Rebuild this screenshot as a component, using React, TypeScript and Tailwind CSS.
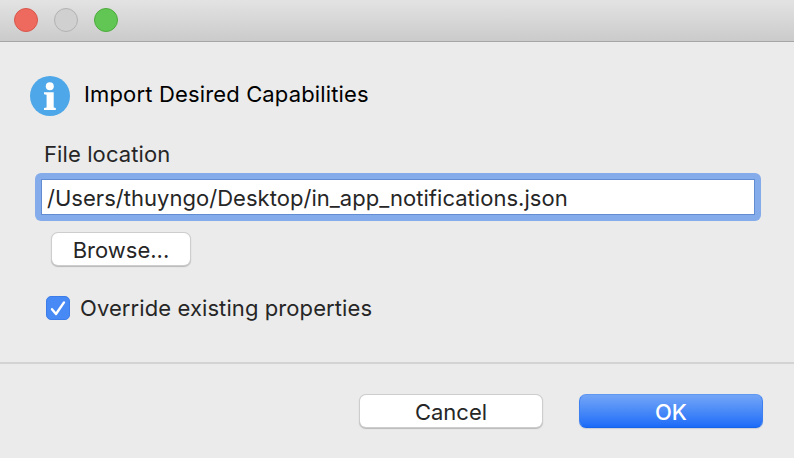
import React from "react";

export default function App() {
  return (
    <main className="flex h-[458px] w-[794px] flex-col overflow-hidden bg-[#ebebeb] font-['Inter','Liberation_Sans',sans-serif] text-[22px] leading-[28px] text-[#262626]">
      <header className="flex h-[42px] shrink-0 items-start gap-4 border-b border-[#a5a5a5] bg-linear-to-b from-[#e3e3e3] to-[#cbcbcb] pt-2 pl-[14px]">
        <span className="size-6 rounded-full border border-[#d9564c] bg-[#ee6a5f]" />
        <span className="size-6 rounded-full border border-[#b2b2b2] bg-[#d0d0d0]" />
        <span className="size-6 rounded-full border border-[#4dab3c] bg-[#62c655]" />
      </header>

      <section className="flex h-[320px] shrink-0 flex-col items-start">
        <div className="mt-[34px] ml-[30px] flex h-10 items-start">
          <svg className="size-10 shrink-0" viewBox="0 0 40 40">
            <circle cx="20" cy="20" r="20" fill="#4ea7e8" />
            <circle cx="19.8" cy="10.2" r="4" fill="#fff" />
            <path d="M14 16.3h9.7v15.2l2.1.6v2H14v-2l2.6-.6V18.7l-2.6-.5z" fill="#fff" />
          </svg>
          <h1 className="mt-[4px] ml-[14px] whitespace-nowrap text-black tracking-[0.15px]">Import Desired Capabilities</h1>
        </div>

        <label htmlFor="location" className="mt-[24px] ml-[44px] whitespace-nowrap tracking-[0.1px]">File location</label>

        <div className="mt-[5px] ml-[35px] h-12 w-[726px] rounded-[6px] bg-[#84abea] p-[6px]">
          <div id="location" className="flex h-9 items-center border border-[#638dd2] bg-white pt-[2px] pl-[5px]">
            <span className="whitespace-nowrap tracking-[0.03px]">/Users/thuyngo/Desktop/in_app_notifications.json</span>
          </div>
        </div>

        <button className="mt-3 ml-[52px] flex h-8 w-[138px] items-center justify-center rounded-[6px] bg-white pt-[2px] shadow-[0_0_0_1px_#cdcdcd,0_1px_1px_1px_#b9b9b9]">
          <span className="whitespace-nowrap">Browse...</span>
        </button>

        <div className="mt-[29px] ml-[46px] flex items-center gap-[10px]">
          <span className="flex size-6 items-center justify-center rounded-[5px] border border-[#3d7de9] bg-[#478af5]">
            <svg className="size-[22px]" viewBox="0 0 22 22" fill="none">
              <path d="M5 12.2 9 17 17 5.4" stroke="#fff" strokeWidth="2.4" strokeLinecap="round" strokeLinejoin="round" />
            </svg>
          </span>
          <span className="whitespace-nowrap tracking-[0.09px]">Override existing properties</span>
        </div>
      </section>

      <footer className="flex grow items-start justify-end gap-[37px] border-t-2 border-[#d3d3d3] pt-[30px] pr-[31px]">
        <button className="mt-px flex h-8 w-[182px] items-center justify-center rounded-[6px] bg-white pt-[2px] shadow-[0_0_0_1px_#cdcdcd,0_1px_1px_1px_#b9b9b9]">
          <span>Cancel</span>
        </button>
        <button className="flex h-[34px] w-[184px] items-center justify-center rounded-[7px] border border-t-[#6097f0] border-x-[#3f80f0] border-b-[#1762ea] bg-linear-to-b from-[#72a5f6] to-[#1b6bf8] pt-[2px] font-medium text-white shadow-[0_1px_1px_#c9ced8]">
          <span>OK</span>
        </button>
      </footer>
    </main>
  );
}
